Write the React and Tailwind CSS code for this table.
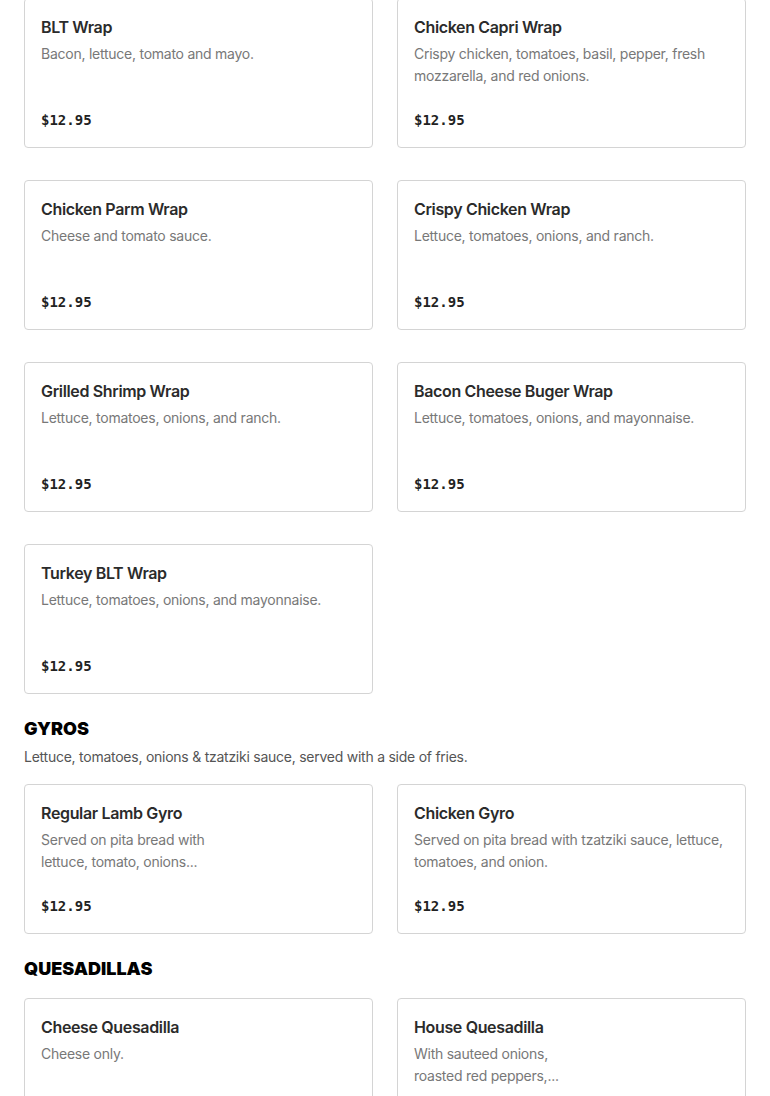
import React from "react";

const sections = [
  {
    items: [
      ["BLT Wrap", "Bacon, lettuce, tomato and mayo."],
      ["Chicken Capri Wrap", "Crispy chicken, tomatoes, basil, pepper, fresh mozzarella, and red onions."],
      ["Chicken Parm Wrap", "Cheese and tomato sauce."],
      ["Crispy Chicken Wrap", "Lettuce, tomatoes, onions, and ranch."],
      ["Grilled Shrimp Wrap", "Lettuce, tomatoes, onions, and ranch."],
      ["Bacon Cheese Buger Wrap", "Lettuce, tomatoes, onions, and mayonnaise."],
      ["Turkey BLT Wrap", "Lettuce, tomatoes, onions, and mayonnaise."],
    ],
  },
  {
    title: "GYROS",
    subtitle: "Lettuce, tomatoes, onions & tzatziki sauce, served with a side of fries.",
    items: [
      ["Regular Lamb Gyro", "Served on pita bread with\nlettuce, tomato, onions..."],
      ["Chicken Gyro", "Served on pita bread with tzatziki sauce, lettuce, tomatoes, and onion."],
    ],
  },
  {
    title: "QUESADILLAS",
    items: [
      ["Cheese Quesadilla", "Cheese only."],
      ["House Quesadilla", "With sauteed onions,\nroasted red peppers,..."],
    ],
  },
];

function Card({ name, desc }) {
  return (
    <div className="h-[150px] border border-[#d4d4d4] rounded-[4px] bg-white px-4 pt-4 pb-4 flex flex-col">
      <div className="text-[16px] leading-[24px] font-semibold tracking-[-0.35px] text-[#2b2b2b]">{name}</div>
      <div className="mt-1 text-[14px] leading-[22px] tracking-[-0.25px] text-[#787878] whitespace-pre-line">{desc}</div>
      <div
        className="mt-auto text-[14px] leading-[22px] font-bold text-[#222]"
        style={{ fontFamily: '"DejaVu Sans Mono", monospace' }}
      >
        $12.95
      </div>
    </div>
  );
}

export default function App() {
  return (
    <div
      className="bg-white w-[770px] px-6 mt-[-2px]"
      style={{ fontFamily: 'Inter, "Liberation Sans", sans-serif' }}
    >
      {sections.map((s, i) => (
        <div key={i} className={i === 0 ? "" : "mt-[21px]"}>
          {s.title && (
            <h2 className="text-[18px] leading-[28px] font-black text-black">{s.title}</h2>
          )}
          {s.subtitle && (
            <p className="mt-[3px] text-[14px] leading-[22px] tracking-[-0.25px] text-[#555]">{s.subtitle}</p>
          )}
          <div className={`grid grid-cols-2 gap-x-6 gap-y-8 ${s.title ? (s.subtitle ? "mt-4" : "mt-[15px]") : ""}`}>
            {s.items.map(([n, d]) => (
              <Card key={n} name={n} desc={d} />
            ))}
          </div>
        </div>
      ))}
    </div>
  );
}
